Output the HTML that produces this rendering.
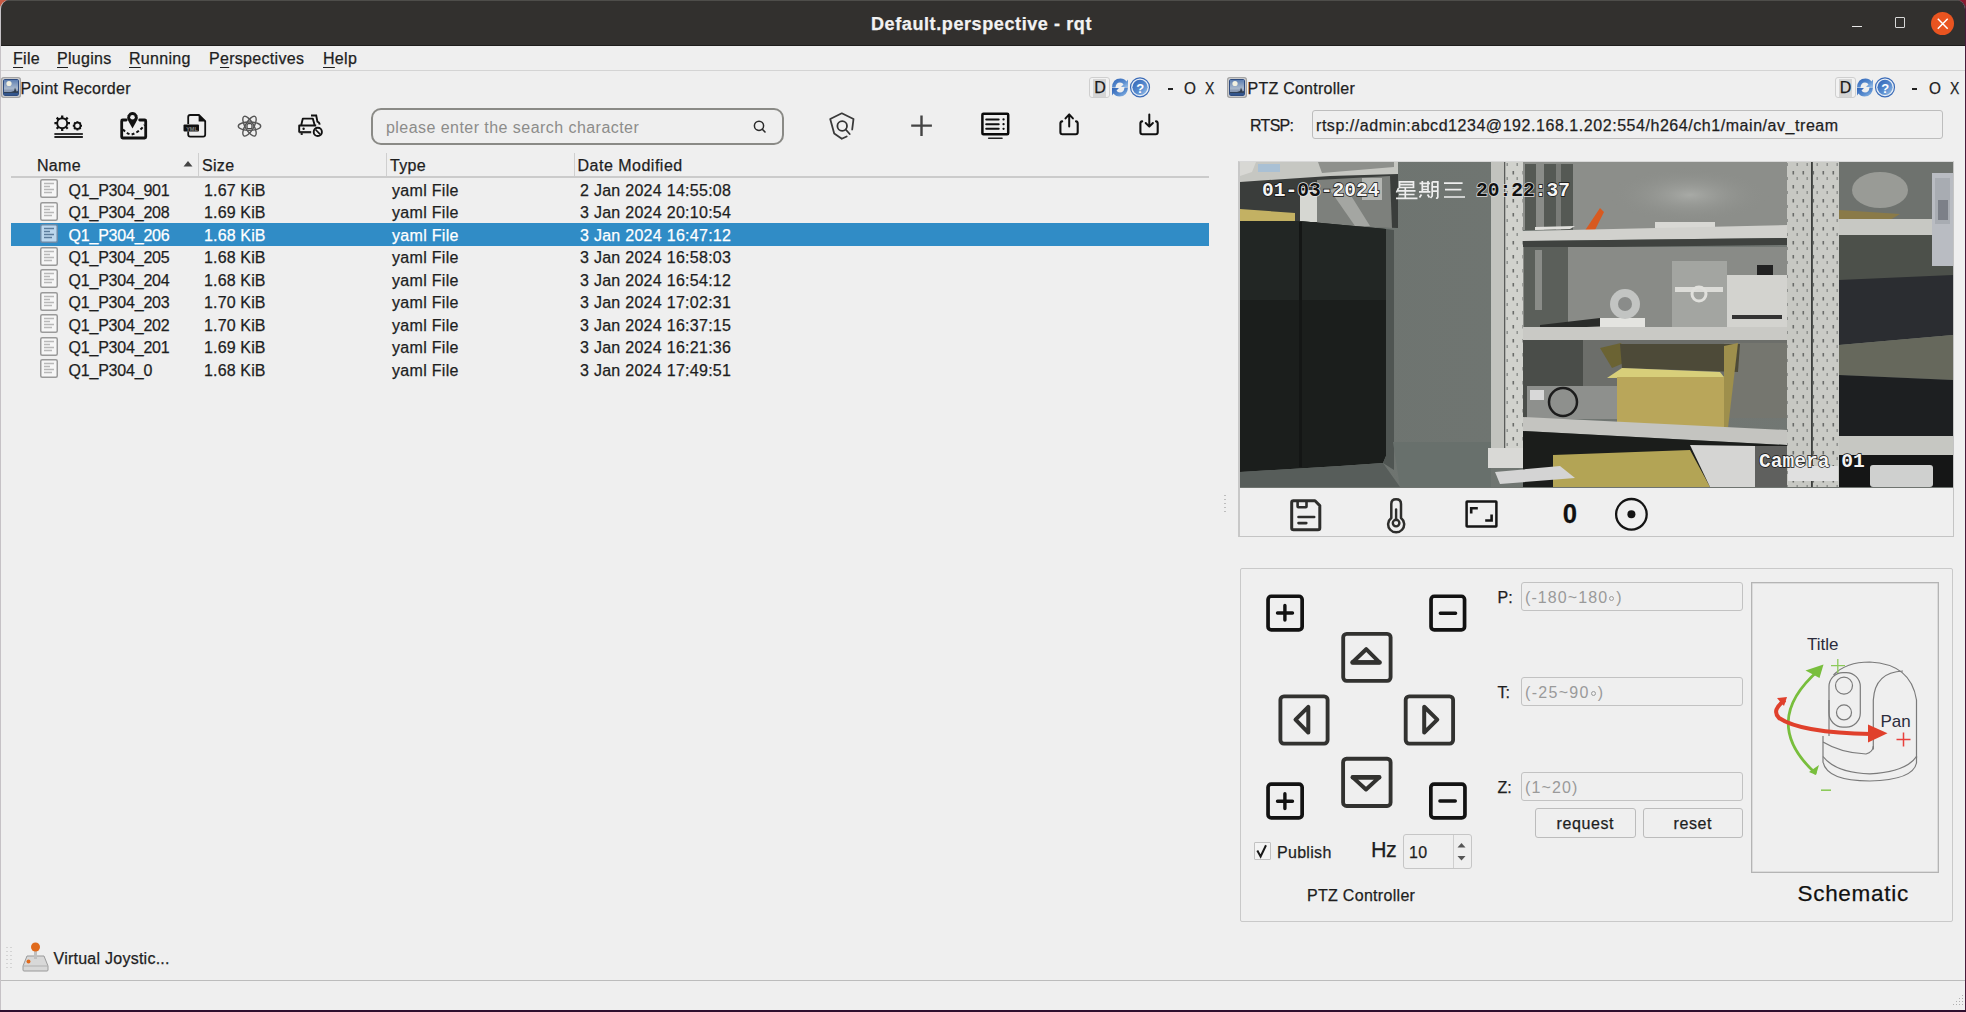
<!DOCTYPE html>
<html><head><meta charset="utf-8">
<style>
*{box-sizing:border-box;margin:0;padding:0}
html,body{width:1966px;height:1012px;overflow:hidden;background:#2e0e2e}
body{position:relative;font-family:"Liberation Sans",sans-serif;font-size:16px;color:#1e1e1e}
.a{position:absolute;white-space:pre;line-height:1;-webkit-text-stroke:0.25px currentColor}
#win{position:absolute;left:0;top:0;width:1966px;height:1010px;background:#efefef;border-left:1px solid #c6c2c6;border-right:1px solid #4a1a3a;overflow:hidden;border-radius:9px 9px 0 0}
#tb{position:absolute;left:0;top:0;width:1966px;height:46px;background:#32302e;border-top:1px solid #4e4d4a;border-bottom:1px solid #1e1d1c}
.hl{position:absolute;height:1px;background:#c8c8c8}
.vl{position:absolute;width:1px;background:#c8c8c8}
.u{text-decoration:underline;text-underline-offset:3px}
</style></head><body>
<div style="position:absolute;left:0;top:0;width:12px;height:12px;background:linear-gradient(135deg,#c85a44 20%,#9a2e48 60%,#6a2040)"></div>
<div style="position:absolute;right:0;top:0;width:12px;height:12px;background:linear-gradient(225deg,#8a1a30 20%,#6a1030 70%)"></div>
<div id="win">
 <div id="tb">
  <div class="a" style="left:870px;top:14px;font-weight:bold;font-size:18px;color:#f2f2f2;letter-spacing:0.6px">Default.perspective - rqt</div>
  <div style="position:absolute;left:1851px;top:24.5px;width:10px;height:1.5px;background:#e8e8e8"></div>
  <div style="position:absolute;left:1893.5px;top:16px;width:10.5px;height:11px;border:1.6px solid #d8d8d8;border-radius:1px"></div>
  <div style="position:absolute;left:1929.5px;top:10.5px;width:23.5px;height:23.5px;border-radius:50%;background:#e95420"></div>
  <svg style="position:absolute;left:1929.5px;top:10.5px" width="24" height="24"><path d="M6.8 6.8L16.7 16.7M16.7 6.8L6.8 16.7" stroke="#fff" stroke-width="1.5"/></svg>
 </div>

 <!-- menu -->
 <div class="a" style="left:12px;top:51px;letter-spacing:0.3px"><span class="u">F</span>ile</div>
 <div class="a" style="left:56px;top:51px;letter-spacing:0.3px"><span class="u">P</span>lugins</div>
 <div class="a" style="left:128px;top:51px;letter-spacing:0.3px"><span class="u">R</span>unning</div>
 <div class="a" style="left:208px;top:51px;letter-spacing:0.3px">P<span class="u">e</span>rspectives</div>
 <div class="a" style="left:322px;top:51px;letter-spacing:0.3px"><span class="u">H</span>elp</div>
 <div class="hl" style="left:0;top:70px;width:1966px;background:#d4d4d4"></div>
 <!-- dock title left -->
 <svg style="position:absolute;left:0px;top:77px" width="20" height="21"><rect x="0.75" y="0.75" width="18.5" height="19.5" rx="2" fill="#eeeeee" stroke="#a4a4a4" stroke-width="1.5"/><defs><linearGradient id="sky0" x1="0" y1="0" x2="0" y2="1"><stop offset="0" stop-color="#5a7cb0"/><stop offset="0.55" stop-color="#a8b8cc"/><stop offset="0.7" stop-color="#8a9ab4"/></linearGradient></defs><rect x="2.5" y="2.5" width="15" height="16" rx="1" fill="url(#sky0)" stroke="#2e4c80" stroke-width="1"/><circle cx="8" cy="6.5" r="2.6" fill="#f2f0e0"/><path d="M3 15H10L13 14L14 10.5L15.5 14.5L17 14V18H3Z" fill="#303c4c"/><rect x="3" y="15.8" width="14" height="2.2" fill="#34568c"/></svg>
 <div class="a" style="left:19.5px;top:81px;letter-spacing:0.25px">Point Recorder</div>

 <div style="position:absolute;left:369.5px;top:107.5px;width:413px;height:37px;border:2px solid #8a8a86;border-radius:10px"></div>
 <div class="a" style="left:385px;top:120px;color:#8c8c8a;letter-spacing:0.45px;-webkit-text-stroke:0">please enter the search character</div>
<svg style="position:absolute;left:0;top:0" width="1966" height="1012"><g transform="translate(-0.9 0.2)"><circle cx="62.1" cy="123" r="5.0" fill="none" stroke="#111" stroke-width="1.9"/><line x1="62.10" y1="118.00" x2="62.10" y2="115.20" stroke="#111" stroke-width="2.28" stroke-linecap="butt"/><line x1="65.64" y1="119.46" x2="67.62" y2="117.48" stroke="#111" stroke-width="2.28" stroke-linecap="butt"/><line x1="67.10" y1="123.00" x2="69.90" y2="123.00" stroke="#111" stroke-width="2.28" stroke-linecap="butt"/><line x1="65.64" y1="126.54" x2="67.62" y2="128.52" stroke="#111" stroke-width="2.28" stroke-linecap="butt"/><line x1="62.10" y1="128.00" x2="62.10" y2="130.80" stroke="#111" stroke-width="2.28" stroke-linecap="butt"/><line x1="58.56" y1="126.54" x2="56.58" y2="128.52" stroke="#111" stroke-width="2.28" stroke-linecap="butt"/><line x1="57.10" y1="123.00" x2="54.30" y2="123.00" stroke="#111" stroke-width="2.28" stroke-linecap="butt"/><line x1="58.56" y1="119.46" x2="56.58" y2="117.48" stroke="#111" stroke-width="2.28" stroke-linecap="butt"/><circle cx="77.3" cy="125.6" r="3.1" fill="none" stroke="#111" stroke-width="1.7"/><line x1="77.30" y1="122.50" x2="77.30" y2="121.00" stroke="#111" stroke-width="2.04" stroke-linecap="butt"/><line x1="79.49" y1="123.41" x2="80.55" y2="122.35" stroke="#111" stroke-width="2.04" stroke-linecap="butt"/><line x1="80.40" y1="125.60" x2="81.90" y2="125.60" stroke="#111" stroke-width="2.04" stroke-linecap="butt"/><line x1="79.49" y1="127.79" x2="80.55" y2="128.85" stroke="#111" stroke-width="2.04" stroke-linecap="butt"/><line x1="77.30" y1="128.70" x2="77.30" y2="130.20" stroke="#111" stroke-width="2.04" stroke-linecap="butt"/><line x1="75.11" y1="127.79" x2="74.05" y2="128.85" stroke="#111" stroke-width="2.04" stroke-linecap="butt"/><line x1="74.20" y1="125.60" x2="72.70" y2="125.60" stroke="#111" stroke-width="2.04" stroke-linecap="butt"/><line x1="75.11" y1="123.41" x2="74.05" y2="122.35" stroke="#111" stroke-width="2.04" stroke-linecap="butt"/><line x1="55" y1="133.8" x2="82" y2="133.8" stroke="#333" stroke-width="2" stroke-linecap="round"/><line x1="55" y1="136.9" x2="82" y2="136.9" stroke="#222" stroke-width="2" stroke-linecap="round"/></g><g transform="translate(-0.8 0)"><path d="M126 120H122.5Q121.5 120 121.5 121V137Q121.5 138 122.5 138H144.5Q145.5 138 145.5 137V121Q145.5 120 144.5 120H139.5" fill="none" stroke="#111" stroke-width="2.8" stroke-linecap="round"/><path d="M132.3 128.6L127.6 120Q126.5 117.5 127.5 115.3Q129.2 111.9 132.3 111.9Q135.4 111.9 137.1 115.3Q138.1 117.5 137 120Z" fill="#111"/><circle cx="132.3" cy="117.2" r="2.3" fill="#efefef"/><path d="M122.8 129.3Q126 133.5 131 134.6Q138 133 144.5 125" fill="none" stroke="#111" stroke-width="2" stroke-dasharray="3 2.2"/><path d="M188 124V117Q188 115 190 115H198.7L205 121.2V134.5Q205 136.6 203 136.6H190Q188 136.6 188 134.5V131.5" fill="none" stroke="#111" stroke-width="1.8"/><path d="M198.4 115L205.4 121.5H198.4Z" fill="#111"/><rect x="183.3" y="124.6" width="15.5" height="7" rx="1" fill="#111"/><text x="186" y="130.6" font-size="5.5" font-family="Liberation Sans" fill="#888" font-weight="bold">YML</text><ellipse cx="249.3" cy="126.2" rx="11.2" ry="4.2" transform="rotate(0 249.3 126.2)" fill="none" stroke="#555" stroke-width="1.4"/><ellipse cx="249.3" cy="126.2" rx="11.2" ry="4.2" transform="rotate(60 249.3 126.2)" fill="none" stroke="#555" stroke-width="1.4"/><ellipse cx="249.3" cy="126.2" rx="11.2" ry="4.2" transform="rotate(120 249.3 126.2)" fill="none" stroke="#555" stroke-width="1.4"/><rect x="246.8" y="123.7" width="5" height="5" rx="1.5" fill="none" stroke="#444" stroke-width="1.3"/><path d="M299 132.5V125.5H316M301 125.3L302.6 118.6H312.6L314.5 125.3" fill="none" stroke="#111" stroke-width="1.9" stroke-linejoin="round"/><path d="M299 132.2H311" stroke="#222" stroke-width="2.2"/><path d="M310.8 115.5H316L317.2 121.6Q319.6 122.6 319.3 124.6" fill="none" stroke="#111" stroke-width="1.9"/><circle cx="303.4" cy="128.8" r="1.2" fill="#111"/><path d="M301.5 133V135" stroke="#222" stroke-width="2"/><circle cx="317.6" cy="131.9" r="4.1" fill="none" stroke="#111" stroke-width="1.9"/><path d="M315.3 129.5L320 134.3" stroke="#111" stroke-width="1.7"/><path d="M846.5 136.5L841.6 138.8L834 133.5L830 119L841.6 113.3L853.3 119L852 129.5" fill="none" stroke="#3a3a3a" stroke-width="1.8" stroke-linejoin="round" stroke-linecap="round"/><circle cx="842" cy="126" r="4.8" fill="none" stroke="#333" stroke-width="1.8"/><path d="M845.5 129.5L849.5 134" stroke="#333" stroke-width="1.8" stroke-linecap="round"/><path d="M921.3 115.5V136M911 125.6H931.7" stroke="#444" stroke-width="2.4"/><rect x="982.2" y="113.7" width="25.8" height="20.5" rx="1" fill="none" stroke="#0a0a0a" stroke-width="2.5"/><path d="M986 119.4H998.5M986 124.2H998.5M986 128.8H998.5" stroke="#111" stroke-width="2" stroke-linecap="round"/><path d="M1003.3 119.4h0.1M1003.3 124.2h0.1M1003.3 128.8h0.1" stroke="#111" stroke-width="2.2" stroke-linecap="round"/><path d="M988.5 138.3H1001.8" stroke="#222" stroke-width="1.6" stroke-linecap="round"/><path d="M1062 121.4Q1060.2 121.6 1060.2 123.5V132.3Q1060.2 134.3 1062.2 134.3H1075.5Q1077.5 134.3 1077.5 132.3V123.5Q1077.5 121.6 1075.8 121.4" fill="none" stroke="#111" stroke-width="2.1" stroke-linecap="round"/><path d="M1069 126.5V114.6M1065.3 118.4L1069 114.4L1072.7 118.4" fill="none" stroke="#111" stroke-width="2" stroke-linecap="round" stroke-linejoin="round"/><path d="M1142 121.4Q1140.2 121.6 1140.2 123.5V132.3Q1140.2 134.3 1142.2 134.3H1155.5Q1157.5 134.3 1157.5 132.3V123.5Q1157.5 121.6 1155.8 121.4" fill="none" stroke="#111" stroke-width="2.1" stroke-linecap="round"/><path d="M1149.1 114.5V126.4M1145.5 123L1149.1 126.6L1152.7 123" fill="none" stroke="#111" stroke-width="2" stroke-linecap="round" stroke-linejoin="round"/></g><circle cx="758" cy="125.8" r="4.6" fill="none" stroke="#2a2a2a" stroke-width="1.5"/><path d="M761.3 129.2L764 132" stroke="#2a2a2a" stroke-width="1.6" stroke-linecap="round"/></svg>

 <!-- table header -->
 <div class="a" style="left:36px;top:157.5px;letter-spacing:0.3px">Name</div>
 <svg style="position:absolute;left:182px;top:160px" width="11" height="8"><path d="M0.5 6.5L5 1L9.5 6.5Z" fill="#444"/></svg>
 <div class="vl" style="left:197px;top:153px;height:23px;background:#cfcfcf"></div>
 <div class="a" style="left:201px;top:157.5px;letter-spacing:0.3px">Size</div>
 <div class="vl" style="left:385px;top:153px;height:23px;background:#cfcfcf"></div>
 <div class="a" style="left:389px;top:157.5px;letter-spacing:0.3px">Type</div>
 <div class="vl" style="left:573px;top:153px;height:23px;background:#cfcfcf"></div>
 <div class="a" style="left:576.5px;top:157.5px;letter-spacing:0.5px">Date Modified</div>
 <div class="hl" style="left:10px;top:176px;width:1198px;height:2px;background:#cbcbcb"></div>
 <svg style="position:absolute;left:39px;top:179.0px" width="19" height="20"><rect x="0.75" y="0.75" width="16.5" height="17.5" rx="1.5" fill="#f6f6f6" stroke="#9a9a9a" stroke-width="1.5"/><path d="M4 4.5H14M4 7.5H10M4 10.5H14M4 13.5H12" stroke="#b8b8b8" stroke-width="1.3"/></svg>
 <div class="a" style="left:67.5px;top:182.5px;color:#1e1e1e;letter-spacing:-0.2px">Q1_P304_901</div>
 <div class="a" style="left:203px;top:182.5px;color:#1e1e1e;letter-spacing:0.15px">1.67 KiB</div>
 <div class="a" style="left:391px;top:182.5px;color:#1e1e1e;letter-spacing:0.3px">yaml File</div>
 <div class="a" style="left:579px;top:182.5px;color:#1e1e1e;letter-spacing:0.28px">2 Jan 2024 14:55:08</div>
 <svg style="position:absolute;left:39px;top:201.5px" width="19" height="20"><rect x="0.75" y="0.75" width="16.5" height="17.5" rx="1.5" fill="#f6f6f6" stroke="#9a9a9a" stroke-width="1.5"/><path d="M4 4.5H14M4 7.5H10M4 10.5H14M4 13.5H12" stroke="#b8b8b8" stroke-width="1.3"/></svg>
 <div class="a" style="left:67.5px;top:205.0px;color:#1e1e1e;letter-spacing:-0.2px">Q1_P304_208</div>
 <div class="a" style="left:203px;top:205.0px;color:#1e1e1e;letter-spacing:0.15px">1.69 KiB</div>
 <div class="a" style="left:391px;top:205.0px;color:#1e1e1e;letter-spacing:0.3px">yaml File</div>
 <div class="a" style="left:579px;top:205.0px;color:#1e1e1e;letter-spacing:0.28px">3 Jan 2024 20:10:54</div>
 <div style="position:absolute;left:10px;top:223.0px;width:1198px;height:22.5px;background:#308cc6"></div>
 <svg style="position:absolute;left:39px;top:224.0px" width="19" height="20"><rect x="0.75" y="0.75" width="16.5" height="17.5" rx="1.5" fill="#bcd7ee" stroke="#6a8aa8" stroke-width="1.5"/><path d="M4 4.5H14M4 7.5H10M4 10.5H14M4 13.5H12" stroke="#5c7c9c" stroke-width="1.3"/></svg>
 <div class="a" style="left:67.5px;top:227.5px;color:#ffffff;letter-spacing:-0.2px">Q1_P304_206</div>
 <div class="a" style="left:203px;top:227.5px;color:#ffffff;letter-spacing:0.15px">1.68 KiB</div>
 <div class="a" style="left:391px;top:227.5px;color:#ffffff;letter-spacing:0.3px">yaml File</div>
 <div class="a" style="left:579px;top:227.5px;color:#ffffff;letter-spacing:0.28px">3 Jan 2024 16:47:12</div>
 <svg style="position:absolute;left:39px;top:246.5px" width="19" height="20"><rect x="0.75" y="0.75" width="16.5" height="17.5" rx="1.5" fill="#f6f6f6" stroke="#9a9a9a" stroke-width="1.5"/><path d="M4 4.5H14M4 7.5H10M4 10.5H14M4 13.5H12" stroke="#b8b8b8" stroke-width="1.3"/></svg>
 <div class="a" style="left:67.5px;top:250.0px;color:#1e1e1e;letter-spacing:-0.2px">Q1_P304_205</div>
 <div class="a" style="left:203px;top:250.0px;color:#1e1e1e;letter-spacing:0.15px">1.68 KiB</div>
 <div class="a" style="left:391px;top:250.0px;color:#1e1e1e;letter-spacing:0.3px">yaml File</div>
 <div class="a" style="left:579px;top:250.0px;color:#1e1e1e;letter-spacing:0.28px">3 Jan 2024 16:58:03</div>
 <svg style="position:absolute;left:39px;top:269.0px" width="19" height="20"><rect x="0.75" y="0.75" width="16.5" height="17.5" rx="1.5" fill="#f6f6f6" stroke="#9a9a9a" stroke-width="1.5"/><path d="M4 4.5H14M4 7.5H10M4 10.5H14M4 13.5H12" stroke="#b8b8b8" stroke-width="1.3"/></svg>
 <div class="a" style="left:67.5px;top:272.5px;color:#1e1e1e;letter-spacing:-0.2px">Q1_P304_204</div>
 <div class="a" style="left:203px;top:272.5px;color:#1e1e1e;letter-spacing:0.15px">1.68 KiB</div>
 <div class="a" style="left:391px;top:272.5px;color:#1e1e1e;letter-spacing:0.3px">yaml File</div>
 <div class="a" style="left:579px;top:272.5px;color:#1e1e1e;letter-spacing:0.28px">3 Jan 2024 16:54:12</div>
 <svg style="position:absolute;left:39px;top:291.5px" width="19" height="20"><rect x="0.75" y="0.75" width="16.5" height="17.5" rx="1.5" fill="#f6f6f6" stroke="#9a9a9a" stroke-width="1.5"/><path d="M4 4.5H14M4 7.5H10M4 10.5H14M4 13.5H12" stroke="#b8b8b8" stroke-width="1.3"/></svg>
 <div class="a" style="left:67.5px;top:295.0px;color:#1e1e1e;letter-spacing:-0.2px">Q1_P304_203</div>
 <div class="a" style="left:203px;top:295.0px;color:#1e1e1e;letter-spacing:0.15px">1.70 KiB</div>
 <div class="a" style="left:391px;top:295.0px;color:#1e1e1e;letter-spacing:0.3px">yaml File</div>
 <div class="a" style="left:579px;top:295.0px;color:#1e1e1e;letter-spacing:0.28px">3 Jan 2024 17:02:31</div>
 <svg style="position:absolute;left:39px;top:314.0px" width="19" height="20"><rect x="0.75" y="0.75" width="16.5" height="17.5" rx="1.5" fill="#f6f6f6" stroke="#9a9a9a" stroke-width="1.5"/><path d="M4 4.5H14M4 7.5H10M4 10.5H14M4 13.5H12" stroke="#b8b8b8" stroke-width="1.3"/></svg>
 <div class="a" style="left:67.5px;top:317.5px;color:#1e1e1e;letter-spacing:-0.2px">Q1_P304_202</div>
 <div class="a" style="left:203px;top:317.5px;color:#1e1e1e;letter-spacing:0.15px">1.70 KiB</div>
 <div class="a" style="left:391px;top:317.5px;color:#1e1e1e;letter-spacing:0.3px">yaml File</div>
 <div class="a" style="left:579px;top:317.5px;color:#1e1e1e;letter-spacing:0.28px">3 Jan 2024 16:37:15</div>
 <svg style="position:absolute;left:39px;top:336.5px" width="19" height="20"><rect x="0.75" y="0.75" width="16.5" height="17.5" rx="1.5" fill="#f6f6f6" stroke="#9a9a9a" stroke-width="1.5"/><path d="M4 4.5H14M4 7.5H10M4 10.5H14M4 13.5H12" stroke="#b8b8b8" stroke-width="1.3"/></svg>
 <div class="a" style="left:67.5px;top:340.0px;color:#1e1e1e;letter-spacing:-0.2px">Q1_P304_201</div>
 <div class="a" style="left:203px;top:340.0px;color:#1e1e1e;letter-spacing:0.15px">1.69 KiB</div>
 <div class="a" style="left:391px;top:340.0px;color:#1e1e1e;letter-spacing:0.3px">yaml File</div>
 <div class="a" style="left:579px;top:340.0px;color:#1e1e1e;letter-spacing:0.28px">3 Jan 2024 16:21:36</div>
 <svg style="position:absolute;left:39px;top:359.0px" width="19" height="20"><rect x="0.75" y="0.75" width="16.5" height="17.5" rx="1.5" fill="#f6f6f6" stroke="#9a9a9a" stroke-width="1.5"/><path d="M4 4.5H14M4 7.5H10M4 10.5H14M4 13.5H12" stroke="#b8b8b8" stroke-width="1.3"/></svg>
 <div class="a" style="left:67.5px;top:362.5px;color:#1e1e1e;letter-spacing:-0.2px">Q1_P304_0</div>
 <div class="a" style="left:203px;top:362.5px;color:#1e1e1e;letter-spacing:0.15px">1.68 KiB</div>
 <div class="a" style="left:391px;top:362.5px;color:#1e1e1e;letter-spacing:0.3px">yaml File</div>
 <div class="a" style="left:579px;top:362.5px;color:#1e1e1e;letter-spacing:0.28px">3 Jan 2024 17:49:51</div>

 <!-- left dock buttons -->

 <div style="position:absolute;left:1088px;top:77px;width:20.5px;height:21px;border:1.5px solid #cfcfcf;border-radius:3px;background:#f2f2f2"></div>
 <div style="position:absolute;left:1091.5px;top:78.5px;width:13.8px;height:18px;background:#d5d5d5"></div>
 <div class="a" style="left:1093.2px;top:79.5px;font-size:16px;color:#1a1a1a">D</div>
 <svg style="position:absolute;left:1110px;top:77px" width="40" height="21">
  <defs><linearGradient id="bl1089" x1="0" y1="0" x2="1" y2="1"><stop offset="0" stop-color="#2f62b5"/><stop offset="0.6" stop-color="#5a8ed0"/><stop offset="1" stop-color="#9fc4ea"/></linearGradient></defs>
  <path d="M1 10.5Q1.5 1.5 9.5 1.5Q13.5 1.5 15.5 4.5L17 2.5V10H10L12.5 7.5Q11.5 5.5 9 5.5Q5 5.5 4.5 10.5Z" fill="url(#bl1089)"/>
  <path d="M17 10.5Q16.5 19.5 8.5 19.5Q4.5 19.5 2.5 16.5L1 18.5V11H8L5.5 13.5Q6.5 15.5 9 15.5Q13 15.5 13.5 10.5Z" fill="url(#bl1089)"/>
  <circle cx="29" cy="10.3" r="9.5" fill="#e8eef6" stroke="#3b6cb8" stroke-width="1.2"/>
  <circle cx="29" cy="10.3" r="7.6" fill="url(#bl1089)"/>
  <text x="25.3" y="15.5" font-family="Liberation Sans" font-weight="bold" font-size="13" fill="#fff">?</text>
 </svg>
 <div style="position:absolute;left:1167px;top:88px;width:5px;height:2px;background:#222"></div>
 <div class="a" style="left:1183px;top:80px;font-size:16.5px;transform:scaleX(0.93);transform-origin:left">O</div>
 <div class="a" style="left:1204px;top:80px;font-size:16.5px;transform:scaleX(0.85);transform-origin:left">X</div>
 <!-- PTZ dock title -->
 <svg style="position:absolute;left:1226px;top:77px" width="20" height="21"><rect x="0.75" y="0.75" width="18.5" height="19.5" rx="2" fill="#eeeeee" stroke="#a4a4a4" stroke-width="1.5"/><defs><linearGradient id="sky1226" x1="0" y1="0" x2="0" y2="1"><stop offset="0" stop-color="#5a7cb0"/><stop offset="0.55" stop-color="#a8b8cc"/><stop offset="0.7" stop-color="#8a9ab4"/></linearGradient></defs><rect x="2.5" y="2.5" width="15" height="16" rx="1" fill="url(#sky1226)" stroke="#2e4c80" stroke-width="1"/><circle cx="8" cy="6.5" r="2.6" fill="#f2f0e0"/><path d="M3 15H10L13 14L14 10.5L15.5 14.5L17 14V18H3Z" fill="#303c4c"/><rect x="3" y="15.8" width="14" height="2.2" fill="#34568c"/></svg>
 <div class="a" style="left:1246.5px;top:81px;letter-spacing:0.25px">PTZ Controller</div>

 <div style="position:absolute;left:1834px;top:77px;width:20.5px;height:21px;border:1.5px solid #cfcfcf;border-radius:3px;background:#f2f2f2"></div>
 <div style="position:absolute;left:1837.5px;top:78.5px;width:13.8px;height:18px;background:#d5d5d5"></div>
 <div class="a" style="left:1838.7px;top:79.5px;font-size:16px;color:#1a1a1a">D</div>
 <svg style="position:absolute;left:1855px;top:77px" width="40" height="21">
  <defs><linearGradient id="bl1834" x1="0" y1="0" x2="1" y2="1"><stop offset="0" stop-color="#2f62b5"/><stop offset="0.6" stop-color="#5a8ed0"/><stop offset="1" stop-color="#9fc4ea"/></linearGradient></defs>
  <path d="M1 10.5Q1.5 1.5 9.5 1.5Q13.5 1.5 15.5 4.5L17 2.5V10H10L12.5 7.5Q11.5 5.5 9 5.5Q5 5.5 4.5 10.5Z" fill="url(#bl1834)"/>
  <path d="M17 10.5Q16.5 19.5 8.5 19.5Q4.5 19.5 2.5 16.5L1 18.5V11H8L5.5 13.5Q6.5 15.5 9 15.5Q13 15.5 13.5 10.5Z" fill="url(#bl1834)"/>
  <circle cx="29" cy="10.3" r="9.5" fill="#e8eef6" stroke="#3b6cb8" stroke-width="1.2"/>
  <circle cx="29" cy="10.3" r="7.6" fill="url(#bl1834)"/>
  <text x="25.3" y="15.5" font-family="Liberation Sans" font-weight="bold" font-size="13" fill="#fff">?</text>
 </svg>
 <div style="position:absolute;left:1911px;top:88px;width:5px;height:2px;background:#222"></div>
 <div class="a" style="left:1928px;top:80px;font-size:16.5px;transform:scaleX(0.93);transform-origin:left">O</div>
 <div class="a" style="left:1949px;top:80px;font-size:16.5px;transform:scaleX(0.85);transform-origin:left">X</div>
 <!-- RTSP -->
 <div class="a" style="left:1249px;top:118px;letter-spacing:-0.7px">RTSP:</div>
 <div style="position:absolute;left:1311px;top:110px;width:630.5px;height:29px;border:1px solid #bdbdbd;border-radius:3px;background:#efefef"></div>
 <div class="a" style="left:1315px;top:118px;letter-spacing:0.55px">rtsp://admin:abcd1234@192.168.1.202:554/h264/ch1/main/av_tream</div>
 <!-- camera frame -->
 <div style="position:absolute;left:1237px;top:161px;width:716px;height:376px;border:1px solid #c4c4c4;border-left:2px solid #c8c8c8;border-top-color:#d8d8d8"></div>
 <div id="cam" style="position:absolute;left:1239px;top:162px;width:713px;height:326px;background:#6f7470;overflow:hidden"><svg width="713" height="326" viewBox="1240 162 713 326" preserveAspectRatio="none" style="position:absolute;left:0;top:0">
<defs>
 <pattern id="holes" x="0" y="0" width="10" height="14" patternUnits="userSpaceOnUse"><rect x="2.5" y="3" width="1.6" height="3.5" fill="#6a6c6a"/><rect x="6.5" y="9" width="1.4" height="3" fill="#8a8c8a"/></pattern>
 <linearGradient id="wallg" x1="0" y1="0" x2="1" y2="0"><stop offset="0" stop-color="#5f6562"/><stop offset="0.15" stop-color="#6e7470"/><stop offset="1" stop-color="#737874"/></linearGradient>
 <radialGradient id="blob1" cx="0.5" cy="0.5" r="0.5"><stop offset="0" stop-color="#a8aaa6"/><stop offset="1" stop-color="#8a8c88" stop-opacity="0"/></radialGradient>
</defs>
<rect x="1240" y="162" width="713" height="325" fill="url(#wallg)"/>
<!-- top-left shelving -->
<polygon points="1240,162 1398,162 1398,176 1330,178 1240,184" fill="#c6c7c2"/>
<rect x="1258" y="164" width="22" height="8" fill="#a9c0d4"/>
<polygon points="1318,162 1394,162 1394,167 1322,173" fill="#8e908c"/>
<polygon points="1240,162 1256,162 1252,172 1240,176" fill="#d8d8d4"/>
<polygon points="1240,182 1330,176 1398,174 1398,228 1240,222" fill="#3a3d3b"/>
<polygon points="1317,180 1390,176 1392,228 1317,226" fill="#7d807c"/>
<polygon points="1330,190 1345,186 1370,226 1355,226" fill="#a4a6a2"/>
<rect x="1362" y="178" width="20" height="22" fill="#b4b6b2"/>
<rect x="1300" y="190" width="17" height="32" fill="#d6d7d2"/>
<polygon points="1240,209 1295,213 1295,224 1240,225" fill="#c3b163"/>
<!-- cabinet -->
<polygon points="1240,221 1300,221 1386,229 1386,456 1383,463 1340,466 1240,472" fill="#1b1e1c"/>
<polygon points="1240,221 1300,221 1386,229 1386,300 1240,300" fill="#222624"/>
<rect x="1299" y="222" width="3" height="245" fill="#141615"/>
<polygon points="1386,229 1394,230 1394,470 1383,463 1386,456" fill="#4f5552"/>
<polygon points="1240,472 1340,466 1383,463 1400,487 1240,487" fill="#575d5a"/>
<polygon points="1393,442 1491,442 1491,487 1400,487" fill="#68706c"/>
<!-- left post -->
<rect x="1491" y="162" width="14" height="292" fill="#c2c3be"/>
<rect x="1505" y="162" width="18" height="292" fill="#d1d2cd"/>
<rect x="1505" y="162" width="18" height="292" fill="url(#holes)"/>
<rect x="1504" y="162" width="1.3" height="292" fill="#5a5c5a"/>
<rect x="1488" y="448" width="40" height="20" fill="#d9d9d6"/>
<!-- shelf interior -->
<rect x="1523" y="162" width="264" height="68" fill="#8c8e8a"/>
<ellipse cx="1690" cy="195" rx="80" ry="28" fill="url(#blob1)"/>
<rect x="1525" y="164" width="48" height="66" fill="#555954"/>
<rect x="1536" y="164" width="8" height="66" fill="#8a8c88"/>
<rect x="1556" y="164" width="5" height="66" fill="#7a7c78"/>
<polygon points="1535,230 1570,229 1575,226 1535,227" fill="#e0e0dc"/>
<polygon points="1584,232 1600,208 1604,212 1595,230" fill="#d85a20"/>
<rect x="1655" y="222" width="60" height="6" fill="#d8d8d4"/>
<polygon points="1523,231 1787,225 1787,238 1523,241" fill="#d1d1cd"/>
<polygon points="1523,241 1787,238 1787,245 1523,248" fill="#3f423f"/>
<rect x="1523" y="247" width="264" height="80" fill="#898b87"/>
<rect x="1524" y="247" width="44" height="80" fill="#5b5f5a"/>
<rect x="1535" y="250" width="7" height="60" fill="#8a8c88"/>
<polygon points="1540,325 1600,318 1602,326 1540,330" fill="#2a2c2a"/>
<rect x="1600" y="318" width="45" height="9" fill="#e4e4e0"/>
<circle cx="1625" cy="304" r="15" fill="#c2c4c2"/>
<circle cx="1625" cy="304" r="7" fill="#8a8c8a"/>
<rect x="1672" y="261" width="55" height="66" fill="#a3a5a1"/>
<rect x="1675" y="287" width="48" height="5" fill="#dcdcd8"/>
<circle cx="1699" cy="294" r="7" fill="none" stroke="#e0e0dc" stroke-width="3"/>
<rect x="1727" y="275" width="60" height="52" fill="#d3d3cf"/>
<rect x="1732" y="315" width="50" height="4" fill="#333"/>
<rect x="1757" y="265" width="16" height="10" fill="#222"/>
<polygon points="1523,327 1787,327 1787,341 1523,340" fill="#c9c9c5"/>
<rect x="1523" y="340" width="264" height="78" fill="#6c6e6a"/>
<rect x="1523" y="340" width="60" height="78" fill="#4a4d49"/>
<rect x="1724" y="343" width="63" height="75" fill="#75766f"/>
<polygon points="1600,348 1621,343 1631,360 1612,368" fill="#6b6333"/>
<polygon points="1620,344 1740,344 1738,372 1622,368" fill="#4d4a38"/>
<polygon points="1622,368 1720,372 1724,377 1607,378" fill="#d8cf7a"/>
<rect x="1617" y="377" width="107" height="51" fill="#b9a65a"/>
<polygon points="1724,346 1738,343 1728,428 1724,428" fill="#9e8f4c"/>
<rect x="1527" y="386" width="90" height="33" fill="#8e908d"/>
<rect x="1530" y="390" width="14" height="10" fill="#d8d8d8"/>
<ellipse cx="1563" cy="402" rx="14" ry="14" fill="none" stroke="#1c1c1c" stroke-width="2.5"/>
<polygon points="1523,417 1787,430 1787,445 1523,431" fill="#c4c4c0"/>
<polygon points="1523,431 1787,445 1787,487 1523,487" fill="#1b1d1b"/>
<polygon points="1553,455 1690,450 1710,487 1553,487" fill="#b3a455"/>
<polygon points="1690,445 1755,446 1755,487 1710,487" fill="#d5d5d3"/>
<rect x="1755" y="446" width="32" height="41" fill="#5f605e"/>
<polygon points="1495,472 1560,466 1575,478 1500,484" fill="#d4d4d4"/>
<!-- posts A/B -->
<rect x="1787" y="162" width="24" height="325" fill="#c7c8c3"/>
<rect x="1787" y="162" width="24" height="325" fill="url(#holes)"/>
<rect x="1811" y="162" width="1.6" height="325" fill="#3c3e3c"/>
<rect x="1813" y="162" width="26" height="325" fill="#cacbc6"/>
<rect x="1813" y="162" width="26" height="325" fill="url(#holes)"/>
<!-- right area -->
<rect x="1839" y="162" width="114" height="57" fill="#6e726e"/>
<ellipse cx="1880" cy="190" rx="28" ry="18" fill="#999b96"/>
<polygon points="1839,210 1900,214 1890,220 1839,220" fill="#8a7a48"/>
<rect x="1839" y="219" width="114" height="16" fill="#c7c8c3"/>
<rect x="1839" y="235" width="114" height="45" fill="#4c504a"/>
<polygon points="1839,280 1953,275 1953,335 1839,345" fill="#2b2d31"/>
<polygon points="1839,345 1953,335 1953,380 1839,375" fill="#66685c"/>
<polygon points="1839,375 1953,380 1953,436 1839,436" fill="#1d1f21"/>
<rect x="1839" y="436" width="114" height="19" fill="#c6c7c2"/>
<rect x="1839" y="455" width="114" height="32" fill="#151616"/>
<rect x="1870" y="465" width="63" height="22" rx="3" fill="#cfd0cf"/>
<rect x="1932" y="173" width="21" height="93" fill="#b9bcc2"/>
<rect x="1935" y="178" width="15" height="46" fill="#a8acb2"/><rect x="1938" y="200" width="10" height="20" fill="#7c8088"/>
<rect x="1788" y="466" width="50" height="15" fill="#e0e0e0"/>
<!-- OSD -->
<g font-family="Liberation Mono" font-weight="bold" font-size="19.6" stroke="#111" stroke-width="1.4" paint-order="stroke" fill="#f4f4f4">
<text x="1262" y="195.5">01-<tspan fill="#111" stroke="#e8e8e8">03</tspan>-2024</text>
<text x="1476" y="195.5"><tspan fill="#111" stroke="#dddddd">20:22</tspan>:37</text>
<text x="1759" y="467">Camera 01</text>
</g>
<g fill="none" stroke="#eeeeee" stroke-width="1.7">
<path d="M1399.5 181.8H1413.5V187.5H1399.5ZM1399.5 184.6H1413.5M1398 190.8H1415.5M1399 194.5H1414.5M1396 198.3H1417.5M1405.3 188V198.3M1398.5 188L1396.5 192.5"/>
<path d="M1419.5 183.4H1430M1422.3 181V192M1428 181V192M1422.3 186.5H1428M1422.3 189.5H1428M1419 191.9H1430.5M1421.5 194.5L1419.5 197.5M1427.5 194.5L1429.5 197.5M1432.2 181.8V196L1430.5 198M1432.2 181.8H1437.8V197Q1437.8 198.5 1436 198M1432.2 186.8H1437.8M1432.2 191.2H1437.8"/>
<path d="M1444 183.2H1462.6M1445 189.7H1461.4M1444 197H1465"/>
</g>
</svg></div>

 <!-- under-camera toolbar icons -->
 <svg style="position:absolute;left:-1px;top:0" width="1966" height="1012">
  <path d="M1293 500.8H1315L1319.8 505.6V528Q1319.8 529.8 1318 529.8H1293.5Q1291.7 529.8 1291.7 528V502.6Q1291.7 500.8 1293.5 500.8Z" fill="none" stroke="#2e2e2c" stroke-width="3" stroke-linejoin="round"/>
  <path d="M1297.6 501V506.5Q1297.6 507.2 1298.3 507.2H1305.8Q1306.5 507.2 1306.5 506.5V501" fill="none" stroke="#2e2e2c" stroke-width="2.6"/>
  <path d="M1298.5 517H1314.2M1298.5 523.1H1306.3" stroke="#2e2e2c" stroke-width="2.6" stroke-linecap="round"/>
  <path d="M1391.3 518V504Q1391.3 499.3 1396.1 499.3Q1401 499.3 1401 504V518A8 8 0 1 1 1391.3 518Z" fill="none" stroke="#2e2e2c" stroke-width="2.5" stroke-linejoin="round"/>
  <path d="M1396.1 509.5V520" stroke="#2e2e2c" stroke-width="2.4" stroke-linecap="round"/>
  <circle cx="1396.1" cy="523.1" r="3.3" fill="none" stroke="#2e2e2c" stroke-width="2.4"/>
  <rect x="1466.6" y="501.6" width="29.8" height="25" fill="none" stroke="#161616" stroke-width="2.5" rx="0.5"/>
  <path d="M1471.2 513.6V508.2H1477.8M1485.2 520.5H1491.6V514.6" fill="none" stroke="#161616" stroke-width="2.6"/>
  <circle cx="1631.4" cy="514.3" r="15.3" fill="none" stroke="#141414" stroke-width="2.3"/>
  <circle cx="1631.4" cy="514.3" r="4" fill="#141414"/>
 </svg>
 <div class="a" style="left:1561px;top:499px;font-size:28.5px;font-weight:bold;color:#111;transform:scaleX(0.9)">0</div>
 <!-- group box -->
 <div style="position:absolute;left:1239px;top:568px;width:712.5px;height:353.5px;border:1px solid #c9c9c9;border-radius:2px"></div>
 <svg style="position:absolute;left:-1px;top:0" width="1966" height="1012">
  <g fill="none" stroke="#121212" stroke-width="3.7">
   <rect x="1268.05" y="596.25" width="34.1" height="33.6" rx="3.2"/>
   <rect x="1431.05" y="596.25" width="33.5" height="33.6" rx="3.2"/>
   <rect x="1268.05" y="784.15" width="34.1" height="33.8" rx="3.2"/>
   <rect x="1430.85" y="784.15" width="34.1" height="33.8" rx="3.2"/>
  </g>
  <path d="M1277.5 613H1292.5M1284.9 605.5V620M1440.3 613.2H1455.6M1277.5 801.2H1292.5M1284.9 793.8V808.5M1439.9 801H1455.3" stroke="#121212" stroke-width="3.4" stroke-linecap="round"/>
  <g fill="none" stroke="#323230" stroke-width="3.85">
   <rect x="1343.2" y="633.8" width="47.4" height="47" rx="3.5"/>
   <rect x="1343.1" y="758.7" width="47.5" height="47.3" rx="3.5"/>
   <rect x="1280.4" y="696.3" width="47.2" height="47.3" rx="3.5"/>
   <rect x="1405.7" y="696.3" width="47.4" height="47.3" rx="3.5"/>
  </g>
  <g fill="none" stroke="#323230" stroke-width="4" stroke-linejoin="round">
   <path d="M1366.2 649.2L1352.6 662.3H1379.5Z"/>
   <path d="M1366 789.5L1352.8 777.4H1379.2Z"/>
   <path d="M1295.5 719.6L1308.3 706.8V732.6Z"/>
   <path d="M1437.3 719.6L1424.2 706.8V732.6Z"/>
  </g>
  <path d="M1352.6 662.5H1379.5M1352.8 777.2H1379.2" stroke="#323230" stroke-width="4.6" stroke-linecap="round"/>
 </svg>
 <!-- checkbox / hz -->
 <div style="position:absolute;left:1252.5px;top:842px;width:17.5px;height:17.5px;border:1px solid #c2c2c2;border-radius:1px;background:#f4f4f4"></div>
 <svg style="position:absolute;left:1252px;top:842px" width="18" height="18"><path d="M4.3 8.6L7.6 14.5L13 3.2" fill="none" stroke="#1a1a1a" stroke-width="2"/></svg>
 <div class="a" style="left:1276px;top:844.5px;letter-spacing:0.3px">Publish</div>
 <div class="a" style="left:1370px;top:840px;font-size:21.5px;letter-spacing:-0.6px">Hz</div>
 <div style="position:absolute;left:1401.5px;top:834px;width:69px;height:34.5px;border:1px solid #c6c6c6;border-radius:3px"></div>
 <div class="vl" style="left:1452px;top:835px;height:33px;background:#cfcfcf"></div>
 <svg style="position:absolute;left:1454px;top:838px" width="14" height="28"><path d="M2.5 9.5L6.5 5L10.5 9.5Z" fill="#555"/><path d="M2.5 18L6.5 22.5L10.5 18Z" fill="#555"/></svg>
 <div class="a" style="left:1408px;top:845px;letter-spacing:0.4px">10</div>
 <div class="a" style="left:1306px;top:888px;letter-spacing:0.3px">PTZ Controller</div>
 <!-- P T Z -->
 <div class="a" style="left:1496.5px;top:589.5px;letter-spacing:0px">P:</div>
 <div style="position:absolute;left:1520px;top:582.0px;width:222px;height:28.6px;border:1.5px solid #c2c2c2;border-radius:3px"></div>
 <div class="a" style="left:1524px;top:589.5px;color:#9a9a9a;-webkit-text-stroke:0;letter-spacing:1.1px">(-180~180<span style="display:inline-block;width:5px;height:5px;border:1px solid #9a9a9a;border-radius:50%;margin:0 2px 1px 1px;vertical-align:1px"></span>)</div>
 <div class="a" style="left:1496.5px;top:684.5px;letter-spacing:0px">T:</div>
 <div style="position:absolute;left:1520px;top:677.0px;width:222px;height:28.6px;border:1.5px solid #c2c2c2;border-radius:3px"></div>
 <div class="a" style="left:1524px;top:684.5px;color:#9a9a9a;-webkit-text-stroke:0;letter-spacing:1.3px">(-25~90<span style="display:inline-block;width:5px;height:5px;border:1px solid #9a9a9a;border-radius:50%;margin:0 2px 1px 1px;vertical-align:1px"></span>)</div>
 <div class="a" style="left:1496.5px;top:779.5px;letter-spacing:0px">Z:</div>
 <div style="position:absolute;left:1520px;top:772.0px;width:222px;height:28.6px;border:1.5px solid #c2c2c2;border-radius:3px"></div>
 <div class="a" style="left:1524px;top:779.5px;color:#9a9a9a;-webkit-text-stroke:0;letter-spacing:1.15px">(1~20)</div>
 <div style="position:absolute;left:1534px;top:808px;width:100.5px;height:29.5px;border:1.5px solid #bcbcbc;border-radius:3px;background:#efefef"></div>
 <div class="a" style="left:1555.5px;top:815.5px;letter-spacing:0.6px">request</div>
 <div style="position:absolute;left:1642px;top:808px;width:100px;height:29.5px;border:1.5px solid #bcbcbc;border-radius:3px;background:#efefef"></div>
 <div class="a" style="left:1672.5px;top:815.5px;letter-spacing:0.6px">reset</div>
 <!-- schematic -->
 <div style="position:absolute;left:1750px;top:582px;width:188px;height:291px;border:1px solid #b4b4b4;box-shadow:inset 0 0 0 0.5px #c8c8c8"></div>
 <div class="a" style="left:1796.5px;top:882.5px;font-size:22.5px;letter-spacing:0.7px;color:#111">Schematic</div>
 <svg style="position:absolute;left:0;top:0" width="1966" height="1012">
  <g fill="none" stroke="#7a7a7a" stroke-width="1.2">
   <path d="M1832.5 675Q1845 662 1868.8 662Q1910 664 1915.5 700V758"/>
   <path d="M1872.3 749.6V700Q1874 672 1902 671"/>
   <path d="M1822 736V762Q1826 781 1868.8 781Q1912 780 1915.5 763V756"/>
   <path d="M1822 756.5Q1835 773 1868.8 773.8Q1905 772 1915.5 756.5"/>
   <path d="M1822 742Q1840 753 1865 754Q1872 752 1872.3 746"/>
   <rect x="1828" y="672.6" width="31.3" height="54.5" rx="14"/>
   <circle cx="1843" cy="685.6" r="8.5"/>
   <circle cx="1843" cy="712.4" r="7.5"/>
   <path d="M1828 700V736"/>
  </g>
  <path d="M1815 773.8Q1758 722 1818 670" fill="none" stroke="#78be3c" stroke-width="2.8"/>
  <path d="M1822.5 664.5L1804.5 670.5L1818.5 678Z" fill="#78be3c"/>
  <path d="M1818 765L1808 772L1815 775Z" fill="#78be3c"/>
  <path d="M1830 665.7H1844M1836.8 659V673" stroke="#8cca5a" stroke-width="1.3"/>
  <path d="M1820 790.2H1830" stroke="#8cca5a" stroke-width="1.6"/>
  <path d="M1784 700Q1770 710 1778 718Q1800 733 1870 734" fill="none" stroke="#e0402c" stroke-width="4"/>
  <path d="M1886.5 733.2L1867 724.5V742.5Z" fill="#e0402c"/>
  <path d="M1776 698L1786 697L1783 706Z" fill="#e0402c"/>
  <path d="M1895.5 739.5H1909.5M1902.5 732.5V746.5" stroke="#e8403c" stroke-width="1.5"/>
  <text x="1806" y="649.5" font-family="Liberation Sans" font-size="17" fill="#2c2c3c">Title</text>
  <text x="1879.5" y="727" font-family="Liberation Sans" font-size="17" fill="#2c2c3c">Pan</text>
 </svg>
 <!-- bottom -->
 <svg style="position:absolute;left:5px;top:946px" width="8" height="24"><g fill="#b8b8b8"><rect x="0.5" y="1" width="1" height="1"/><rect x="4.5" y="1" width="1" height="1"/><rect x="0.5" y="5" width="1" height="1"/><rect x="4.5" y="5" width="1" height="1"/><rect x="0.5" y="9" width="1" height="1"/><rect x="4.5" y="9" width="1" height="1"/><rect x="0.5" y="13" width="1" height="1"/><rect x="4.5" y="13" width="1" height="1"/><rect x="0.5" y="17" width="1" height="1"/><rect x="4.5" y="17" width="1" height="1"/><rect x="0.5" y="21" width="1" height="1"/><rect x="4.5" y="21" width="1" height="1"/></g></svg>
 <svg style="position:absolute;left:20px;top:941px" width="30" height="32">
  <path d="M2 25L6 15H23L27 25V29Q27 30 26 30H3Q2 30 2 29Z" fill="#d8d8d8" stroke="#9a9a9a" stroke-width="1"/>
  <path d="M2 25H27" stroke="#b0b0b0" stroke-width="1"/>
  <rect x="13" y="7" width="3" height="11" fill="#c0c0c0"/>
  <circle cx="14.5" cy="6" r="4.5" fill="#e06a1c"/>
  <circle cx="7.5" cy="20.5" r="2" fill="#e06a1c"/>
 </svg>
 <div class="a" style="left:52.5px;top:950.5px;letter-spacing:0.25px">Virtual Joystic...</div>
 <div class="hl" style="left:0;top:980px;width:1966px;background:#bcbcbc"></div>
 <svg style="position:absolute;left:1948px;top:993px" width="16" height="16"><g fill="#b0b0b0"><rect x="13" y="2" width="1" height="1"/><rect x="10" y="5" width="1" height="1"/><rect x="13" y="5" width="1" height="1"/><rect x="7" y="8" width="1" height="1"/><rect x="10" y="8" width="1" height="1"/><rect x="13" y="8" width="1" height="1"/><rect x="4" y="11" width="1" height="1"/><rect x="7" y="11" width="1" height="1"/><rect x="10" y="11" width="1" height="1"/><rect x="13" y="11" width="1" height="1"/></g></svg>
 <div class="a" style="left:1223px;top:494.5px;width:2px;height:20px;background:repeating-linear-gradient(#bdbdbd 0 1px,transparent 1px 4px)"></div>
</div>
</body></html>
